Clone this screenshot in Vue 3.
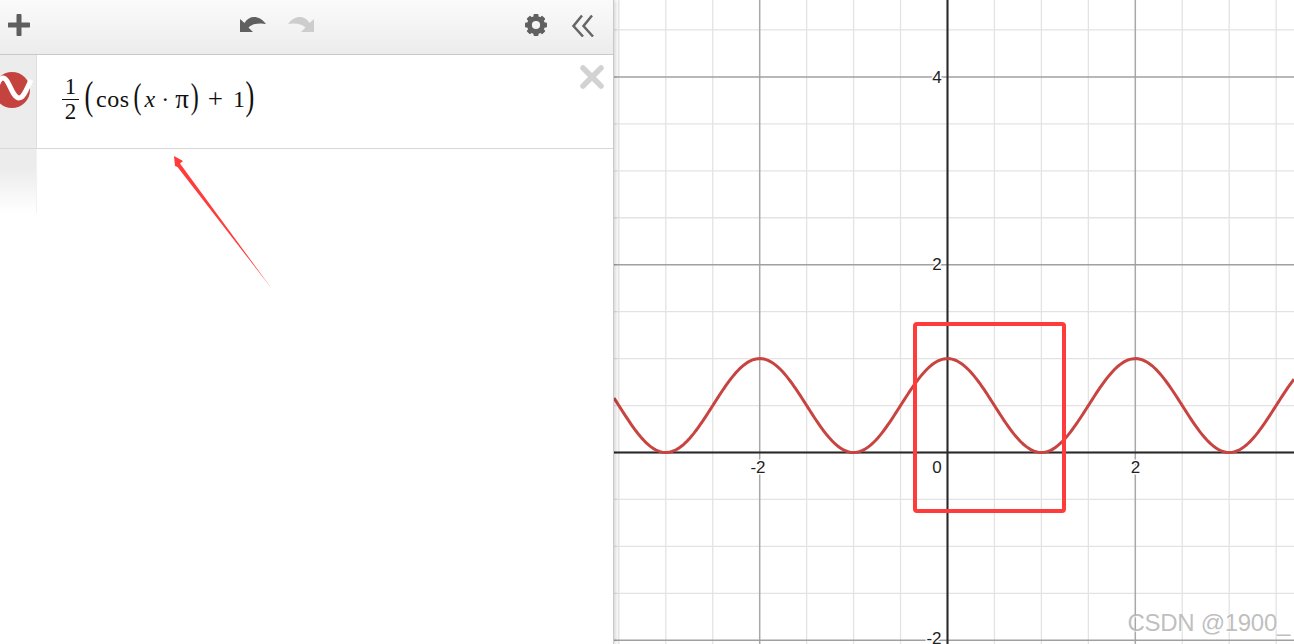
<template>
  <div class="calculator">
    <section class="expressions">
      <header class="toolbar">
        <svg class="icon-plus" width="22" height="22" viewBox="0 0 22 22">
          <path d="M11 1.5v19M1.5 11h19" stroke="#5e5e5e" stroke-width="5" stroke-linecap="round" />
        </svg>
        <div class="history">
          <svg width="26" height="18" viewBox="0 0 26 18">
            <path :d="arrowPath" fill="#606060" />
          </svg>
          <svg class="redo" width="26" height="18" viewBox="0 0 26 18">
            <path :d="arrowPath" fill="#cdcdcd" />
          </svg>
        </div>
        <svg class="gear" width="24" height="24" viewBox="0 0 24 24">
          <rect
            v-for="angle in gearTeeth"
            :key="angle"
            x="9.5"
            y="1"
            width="5"
            height="5"
            rx="1"
            fill="#606060"
            :transform="`rotate(${angle} 12 12)`"
          />
          <circle cx="12" cy="12" r="6.6" fill="none" stroke="#606060" stroke-width="5" />
        </svg>
        <svg class="collapse" width="24" height="24" viewBox="0 0 24 24">
          <path d="M11 2.5 2.5 13 12 23.500M21 2.500 12.500 13 22 23.500" fill="none" stroke="#666" stroke-width="2.500" />
        </svg>
      </header>

      <div class="expression-row">
        <div class="gutter">
          <svg width="36" height="38" viewBox="0 0 36 38">
            <circle cx="12" cy="18" r="18" fill="#c5433f" />
            <path d="M-5 20C-2 10 0 6 3 6C9 6 12 26 19 26C24 26 27 16 31 8" fill="none" stroke="#fff" stroke-width="5" />
          </svg>
        </div>
        <div class="formula">
          <span class="fraction">
            <span>1</span>
            <span class="over">2</span>
          </span>
          <span class="paren big">(</span>
          <span class="fn">cos</span>
          <span class="paren inner-open">(</span>
          <i class="var">x</i>
          <span class="dot">·</span>
          <span class="pi">π</span>
          <span class="paren">)</span>
          <span class="plus">+</span>
          <span>1</span>
          <span class="paren big closing">)</span>
        </div>
        <svg class="remove" width="24" height="24" viewBox="0 0 24 24">
          <path d="M3 3 21 21M21 3 3 21" stroke="#d2d2d2" stroke-width="5.500" stroke-linecap="round" />
        </svg>
      </div>
      <div class="gutter-fade"></div>

      <svg class="annotation" width="300" height="300" viewBox="0 0 300 300">
        <polygon points="174,156 183,161 180,163.500 272,289 177.500,167 175,166" fill="#ff3b3b" />
      </svg>
    </section>

    <section class="graph">
      <svg width="680" height="644" viewBox="614 0 680 644">
        <line
          v-for="x in minorX"
          :key="'vm' + x"
          :x1="x"
          :x2="x"
          y1="0"
          y2="644"
          stroke="#e3e3e3"
          stroke-width="1.300"
        />
        <line
          v-for="y in minorY"
          :key="'hm' + y"
          x1="614"
          x2="1294"
          :y1="y"
          :y2="y"
          stroke="#e3e3e3"
          stroke-width="1.300"
        />
        <line
          v-for="x in majorX"
          :key="'vj' + x"
          :x1="x"
          :x2="x"
          y1="0"
          y2="644"
          stroke="#a8a8a8"
          stroke-width="1.500"
        />
        <line
          v-for="y in majorY"
          :key="'hj' + y"
          x1="614"
          x2="1294"
          :y1="y"
          :y2="y"
          stroke="#a0a0a0"
          stroke-width="1.500"
        />
        <line x1="614" x2="1294" :y1="originY" :y2="originY" stroke="#2a2a2a" stroke-width="2" />
        <line :x1="originX" :x2="originX" y1="0" y2="644" stroke="#2a2a2a" stroke-width="2" />

        <path :d="curve" fill="none" stroke="#c74440" stroke-width="3" />

        <g class="tick">
          <text x="758" y="473" text-anchor="middle">-2</text>
          <text x="937" y="473" text-anchor="middle">0</text>
          <text x="1135.500" y="473" text-anchor="middle">2</text>
          <text x="937" y="83" text-anchor="middle">4</text>
          <text x="937" y="270" text-anchor="middle">2</text>
          <text x="934" y="644" text-anchor="middle">-2</text>
        </g>

        <rect x="915" y="324" width="149" height="187" rx="2" fill="none" stroke="#ff3c3c" stroke-width="4" />
      </svg>
      <div class="watermark">CSDN @1900_</div>
    </section>
  </div>
</template>

<script setup>
import { computed } from 'vue';

const originX = 947.5;
const originY = 452.5;
const unit = 93.9;

const arrowPath = 'M0 3L0 16L13 16L8.5 11.5C12 8 19 6.500 26 8C20 0 10 -2 4.500 7Z';
const gearTeeth = [0, 45, 90, 135, 180, 225, 270, 315];

// grid lines every half unit, every 4th one is a major line
function steps(origin, from, to) {
  const lines = [];
  for (let k = -12; k <= 12; k++) {
    const pos = origin + k * unit / 2;
    if (pos >= from && pos <= to) lines.push({ pos, major: k % 4 === 0 });
  }
  return lines;
}

const xs = steps(originX, 614, 1294);
const ys = steps(originY, 0, 644);
const minorX = xs.filter((l) => !l.major).map((l) => l.pos);
const majorX = xs.filter((l) => l.major).map((l) => l.pos);
const minorY = ys.filter((l) => !l.major).map((l) => l.pos);
const majorY = ys.filter((l) => l.major).map((l) => l.pos);

const curve = computed(() => {
  const points = [];
  for (let px = 614; px <= 1294; px += 2) {
    const x = (px - originX) / unit;
    const y = 0.5 * (Math.cos(x * Math.PI) + 1);
    points.push(`${px} ${(originY - y * unit).toFixed(2)}`);
  }
  return 'M' + points.join('L');
});
</script>

<style scoped>
.calculator {
  display: flex;
  width: 1294px;
  height: 644px;
  overflow: hidden;
  background: #fff;
}

.expressions {
  position: relative;
  z-index: 1;
  flex: 0 0 614px;
  box-sizing: border-box;
  border-right: 1px solid #c9c9c9;
  box-shadow: 2px 0 4px rgba(0, 0, 0, 0.16);
  background: #fff;
}

.toolbar {
  display: flex;
  align-items: center;
  box-sizing: border-box;
  height: 55px;
  padding: 0 18px 5px 8px;
  border-bottom: 1px solid #c8c8c8;
  background: linear-gradient(#fbfbfb, #ececec);
}

.icon-plus {
  display: block;
}

.history {
  display: flex;
  gap: 22px;
  margin-left: 210px;
  margin-right: auto;
}

.history svg {
  display: block;
}

.redo {
  transform: scaleX(-1);
}

.gear {
  display: block;
  margin-right: 23px;
}

.collapse {
  display: block;
}

.expression-row {
  display: flex;
  position: relative;
  box-sizing: border-box;
  height: 94px;
  border-bottom: 1px solid #d8d8d8;
}

.gutter {
  box-sizing: border-box;
  width: 37px;
  padding-top: 17px;
  border-right: 1px solid #dedede;
  background: #ececec;
  overflow: hidden;
}

.gutter svg {
  display: block;
  overflow: hidden;
}

.gutter-fade {
  box-sizing: border-box;
  width: 37px;
  height: 64px;
  border-right: 1px solid #f2f2f2;
  background: linear-gradient(#ececec 30%, #fff);
}

.formula {
  display: flex;
  align-items: center;
  height: 88px;
  margin-left: 25px;
  font-family: "Liberation Serif", serif;
  font-size: 24px;
  color: #111;
}

.fraction {
  display: flex;
  flex-direction: column;
  align-items: center;
  width: 17px;
  margin-right: 4px;
  font-size: 23px;
  line-height: 24px;
}

.over {
  align-self: stretch;
  text-align: center;
  border-top: 1px solid #111;
}

.fn {
  letter-spacing: 0.5px;
}

.paren {
  display: inline-block;
  transform: scaleY(1.5);
  margin: 0 1px 5px 0;
}

.paren.big {
  transform: scale(1.1, 1.65);
  margin: 0 3px 6px 2px;
}

.paren.closing {
  margin-left: 1px;
}

.paren.inner-open {
  margin-left: 4px;
}

.var {
  margin-left: 2px;
}

.dot {
  margin: 0 6px;
}

.pi {
  margin-right: 2px;
  font-size: 27px;
}

.plus {
  margin: 0 10px 0 8px;
  font-size: 27px;
}

.remove {
  position: absolute;
  top: 10px;
  right: 9px;
}

.annotation {
  position: absolute;
  top: 0;
  left: 0;
  pointer-events: none;
}

.graph {
  position: relative;
  flex: 1;
}

.graph svg {
  display: block;
}

.tick text {
  font-family: "Liberation Sans", Arial, sans-serif;
  font-size: 17px;
  fill: #222;
  paint-order: stroke;
  stroke: #fff;
  stroke-width: 3px;
}

.watermark {
  position: absolute;
  right: 4px;
  bottom: 7px;
  font-family: "Liberation Sans", Arial, sans-serif;
  font-size: 24px;
  line-height: 28px;
  letter-spacing: -0.3px;
  color: rgba(170, 170, 170, 0.75);
  text-shadow: 1px 1px 1px rgba(255, 255, 255, 0.8);
}
</style>

<style>
html,
body {
  overflow: hidden;
}
</style>
